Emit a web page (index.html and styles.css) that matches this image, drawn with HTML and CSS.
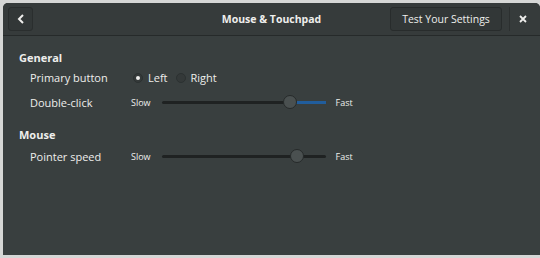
FILE: index.html
```html
<!DOCTYPE html>
<html lang="en">
<head>
    <meta charset="UTF-8">
    <title>Mouse &amp; Touchpad</title>
    <link rel="stylesheet" href="styles.css">
</head>
<body>
    <div class="window">
        <div class="headerbar">
            <button class="back-btn">
                <svg width="8" height="10" viewBox="0 0 8 10"><path d="M6 1 L2 5 L6 9" stroke="#eeeeec" stroke-width="2" fill="none"/></svg>
            </button>
            <div class="title">Mouse &amp; Touchpad</div>
            <button class="test-btn">Test Your Settings</button>
            <div class="sep"></div>
            <div class="close">
                <svg width="8" height="8" viewBox="0 0 8 8"><path d="M1 1 L7 7 M7 1 L1 7" stroke="#eeeeec" stroke-width="1.8"/></svg>
            </div>
        </div>
        <div class="content">
            <div class="section-title">General</div>
            <div class="row">
                <div class="label">Primary button</div>
                <div class="radios">
                    <span class="radio checked"></span><span class="radio-label">Left</span>
                    <span class="radio"></span><span class="radio-label">Right</span>
                </div>
            </div>
            <div class="row">
                <div class="label">Double-click</div>
                <div class="slider">
                    <span class="small">Slow</span>
                    <div class="trough">
                        <div class="fill" style="left: 131px"></div>
                        <div class="knob" style="left: 121px"></div>
                    </div>
                    <span class="small">Fast</span>
                </div>
            </div>
            <div class="section-title mouse">Mouse</div>
            <div class="row">
                <div class="label">Pointer speed</div>
                <div class="slider">
                    <span class="small">Slow</span>
                    <div class="trough">
                        <div class="knob" style="left: 128px"></div>
                    </div>
                    <span class="small">Fast</span>
                </div>
            </div>
        </div>
    </div>
</body>
</html>
```

FILE: styles.css
```css
body {
    margin: 0;
    background-color: #d6d7d6;
    font-family: "Open Sans", "DejaVu Sans", sans-serif;
    font-size: 11px;
    color: #eeeeec;
}

.window {
    margin: 3px 0 3px 3px;
    height: 252px;
    background-color: #393f3f;
    border-radius: 5px 5px 0 0;
    overflow: hidden;
}

.headerbar {
    display: flex;
    align-items: center;
    padding: 0 4px 0 5px;
    background-color: #363b3b;
    border-bottom: 1px solid #262a2a;
    box-sizing: border-box;
    height: 33px;
}

.back-btn {
    width: 25px;
    height: 24px;
    background-color: #323737;
    border: 1px solid #2a2e2e;
    border-radius: 3px;
    display: flex;
    align-items: center;
    justify-content: center;
    padding: 0;
}

.title {
    flex: 1;
    text-align: center;
    font-weight: bold;
    font-size: 10.5px;
    padding-left: 120px;
}

.test-btn {
    height: 24px;
    width: 112px;
    background-color: #323737;
    border: 1px solid #282c2c;
    border-radius: 3px;
    color: #eeeeec;
    font-family: inherit;
    font-size: 10.5px;
    padding: 0;
}

.sep {
    width: 1px;
    height: 24px;
    background-color: #2c3030;
    margin-left: 7px;
}

.close {
    width: 26px;
    display: flex;
    justify-content: center;
}

.content {
    padding: 14px 16px;
}

.section-title {
    font-weight: bold;
    height: 15px;
}

.section-title.mouse {
    margin-top: 12px;
    height: 17px;
}

.row {
    display: flex;
    align-items: center;
    height: 25px;
    padding-left: 11px;
}

.label {
    width: 101px;
}

.radios {
    display: flex;
    align-items: center;
    padding-left: 2px;
}

.radio {
    width: 10px;
    height: 10px;
    border-radius: 50%;
    background-color: #343939;
    border: 1px solid #2c3131;
    box-sizing: border-box;
    margin-right: 5px;
    position: relative;
}

.radio.checked::after {
    content: "";
    position: absolute;
    left: 2px;
    top: 2px;
    width: 4px;
    height: 4px;
    border-radius: 50%;
    background-color: #eeeeec;
}

.radio-label {
    margin-right: 8px;
}

.slider {
    display: flex;
    align-items: center;
}

.small {
    font-size: 9px;
}

.trough {
    position: relative;
    width: 164px;
    height: 3px;
    background-color: #1f2222;
    margin: 0 10px 0 11px;
    border-radius: 2px;
}

.fill {
    position: absolute;
    top: 0;
    right: 0;
    height: 3px;
    background-color: #215d9c;
}

.knob {
    position: absolute;
    top: -6px;
    width: 14px;
    height: 14px;
    border-radius: 50%;
    background-color: #4a5050;
    border: 1px solid #262a2a;
    box-sizing: border-box;
}
```
